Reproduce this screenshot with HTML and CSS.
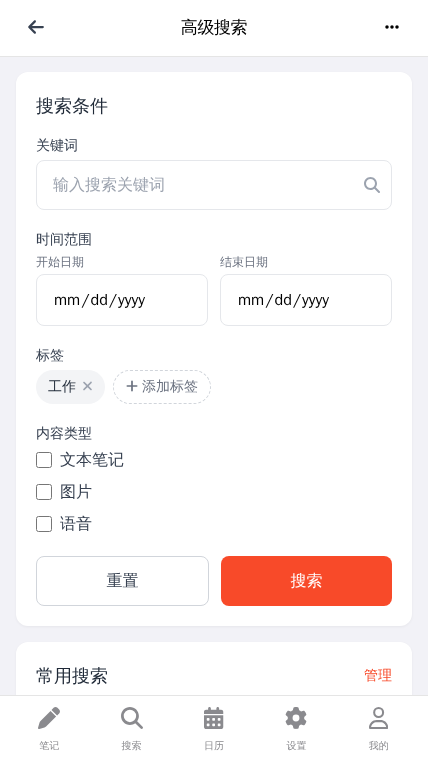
FILE: index.html
```html
<!DOCTYPE html>
<html lang="zh-CN">
<head>
<meta charset="utf-8">
<title>高级搜索</title>
<link rel="stylesheet" href="styles.css">
</head>
<body>
<div class="app">
  <header class="header">
    <svg class="icon back" viewBox="0 0 448 512"><path d="M9.4 233.4c-12.5 12.5-12.5 32.8 0 45.3l160 160c12.5 12.5 32.8 12.5 45.3 0s12.5-32.8 0-45.3L109.2 288 416 288c17.7 0 32-14.3 32-32s-14.3-32-32-32l-306.7 0L214.6 118.6c12.5-12.5 12.5-32.8 0-45.3s-32.8-12.5-45.3 0l-160 160z"/></svg>
    <h1>高级搜索</h1>
    <svg class="icon more" viewBox="0 0 448 512"><path d="M8 256a56 56 0 1 1 112 0A56 56 0 1 1 8 256zm160 0a56 56 0 1 1 112 0 56 56 0 1 1 -112 0zm216-56a56 56 0 1 1 0 112 56 56 0 1 1 0-112z"/></svg>
  </header>
  <main class="content">
    <section class="card">
      <h2>搜索条件</h2>
      <div class="group">
        <label class="label">关键词</label>
        <div class="search-box">
          <input class="keyword" type="text" placeholder="输入搜索关键词">
          <svg class="icon glass" viewBox="0 0 512 512"><path d="M416 208c0 45.9-14.9 88.3-40 122.7L502.6 457.4c12.5 12.5 12.5 32.8 0 45.3s-32.8 12.5-45.3 0L330.7 376c-34.4 25.2-76.8 40-122.7 40C93.1 416 0 322.9 0 208S93.1 0 208 0S416 93.1 416 208zM208 352a144 144 0 1 0 0-288 144 144 0 1 0 0 288z"/></svg>
        </div>
      </div>
      <div class="group">
        <label class="label">时间范围</label>
        <div class="dates">
          <div><label class="sub">开始日期</label><input class="date" type="date"></div>
          <div><label class="sub">结束日期</label><input class="date" type="date"></div>
        </div>
      </div>
      <div class="group">
        <label class="label">标签</label>
        <div class="tags">
          <span class="tag">工作<svg class="icon close" viewBox="0 0 384 512"><path d="M342.6 150.6c12.5-12.5 12.5-32.8 0-45.3s-32.8-12.5-45.3 0L192 210.7 86.6 105.4c-12.5-12.5-32.8-12.5-45.3 0s-12.5 32.8 0 45.3L146.7 256 41.4 361.4c-12.5 12.5-12.5 32.8 0 45.3s32.8 12.5 45.3 0L192 301.3 297.4 406.6c12.5 12.5 32.8 12.5 45.3 0s12.5-32.8 0-45.3L237.3 256 342.6 150.6z"/></svg></span>
          <span class="tag add"><svg class="icon plus" viewBox="0 0 448 512"><path d="M256 80c0-17.7-14.3-32-32-32s-32 14.3-32 32V224H48c-17.7 0-32 14.3-32 32s14.3 32 32 32H192V432c0 17.7 14.3 32 32 32s32-14.3 32-32V288H400c17.7 0 32-14.3 32-32s-14.3-32-32-32H256V80z"/></svg>添加标签</span>
        </div>
      </div>
      <div class="group types">
        <label class="label">内容类型</label>
        <label class="check"><input type="checkbox">文本笔记</label>
        <label class="check"><input type="checkbox">图片</label>
        <label class="check"><input type="checkbox">语音</label>
      </div>
      <div class="actions">
        <button class="btn reset">重置</button>
        <button class="btn primary">搜索</button>
      </div>
    </section>
    <section class="card">
      <div class="card-head"><h2>常用搜索</h2><a class="manage">管理</a></div>
    </section>
  </main>
  <nav class="tabs">
    <a class="tab"><svg class="icon" viewBox="0 0 512 512"><path d="M362.7 19.3L314.3 67.7 444.3 197.7l48.4-48.4c25-25 25-65.5 0-90.5L453.3 19.3c-25-25-65.5-25-90.5 0zm-71 71L58.6 323.5c-10.4 10.4-18 23.3-22.2 37.4L1 481.2C-1.5 489.7 .8 498.8 7 505s15.3 8.5 23.7 6.1l120.3-35.4c14.1-4.2 27-11.8 37.4-22.2L421.7 220.3 291.7 90.3z"/></svg><span>笔记</span></a>
    <a class="tab"><svg class="icon" viewBox="0 0 512 512"><path d="M416 208c0 45.9-14.9 88.3-40 122.7L502.6 457.4c12.5 12.5 12.5 32.8 0 45.3s-32.8 12.5-45.3 0L330.7 376c-34.4 25.2-76.8 40-122.7 40C93.1 416 0 322.9 0 208S93.1 0 208 0S416 93.1 416 208zM208 352a144 144 0 1 0 0-288 144 144 0 1 0 0 288z"/></svg><span>搜索</span></a>
    <a class="tab"><svg class="icon" viewBox="0 0 448 512"><path fill-rule="evenodd" d="M128 0c17.7 0 32 14.3 32 32V64H288V32c0-17.7 14.3-32 32-32s32 14.3 32 32V64h48c26.5 0 48 21.5 48 48v48H0V112C0 85.5 21.5 64 48 64H96V32c0-17.7 14.3-32 32-32zM0 192H448V464c0 26.5-21.5 48-48 48H48c-26.5 0-48-21.5-48-48V192zm64 80v32c0 8.8 7.2 16 16 16h32c8.8 0 16-7.2 16-16v-32c0-8.8-7.2-16-16-16H80c-8.8 0-16 7.2-16 16zm128 0v32c0 8.8 7.2 16 16 16h32c8.8 0 16-7.2 16-16v-32c0-8.8-7.2-16-16-16h-32c-8.8 0-16 7.2-16 16zm128 0v32c0 8.8 7.2 16 16 16h32c8.8 0 16-7.2 16-16v-32c0-8.8-7.2-16-16-16h-32c-8.8 0-16 7.2-16 16zM64 400v32c0 8.8 7.2 16 16 16h32c8.8 0 16-7.2 16-16v-32c0-8.8-7.2-16-16-16H80c-8.8 0-16 7.2-16 16zm128 0v32c0 8.8 7.2 16 16 16h32c8.8 0 16-7.2 16-16v-32c0-8.8-7.2-16-16-16h-32c-8.8 0-16 7.2-16 16zm128 0v32c0 8.8 7.2 16 16 16h32c8.8 0 16-7.2 16-16v-32c0-8.8-7.2-16-16-16h-32c-8.8 0-16 7.2-16 16z"/></svg><span>日历</span></a>
    <a class="tab"><svg class="icon" viewBox="0 0 512 512"><path d="M495.9 166.6c3.2 8.7 .5 18.4-6.4 24.6l-43.3 39.4c1.1 8.3 1.7 16.8 1.7 25.4s-.6 17.1-1.7 25.4l43.3 39.4c6.9 6.2 9.6 15.9 6.4 24.6c-4.4 11.9-9.7 23.3-15.8 34.3l-4.7 8.1c-6.6 11-14 21.4-22.1 31.2c-5.9 7.2-15.7 9.6-24.5 6.8l-55.7-17.7c-13.4 10.3-28.2 18.9-44 25.4l-12.5 57.1c-2 9.1-9 16.3-18.2 17.8c-13.8 2.3-28 3.5-42.5 3.5s-28.7-1.2-42.5-3.5c-9.2-1.5-16.2-8.7-18.2-17.8l-12.5-57.1c-15.8-6.5-30.6-15.1-44-25.4L83.1 425.9c-8.8 2.8-18.6 .3-24.5-6.8c-8.1-9.8-15.5-20.2-22.1-31.2l-4.7-8.1c-6.1-11-11.4-22.4-15.8-34.3c-3.2-8.7-.5-18.4 6.4-24.6l43.3-39.4C64.6 273.1 64 264.6 64 256s.6-17.1 1.7-25.4L22.4 191.2c-6.9-6.2-9.6-15.9-6.4-24.6c4.4-11.9 9.7-23.3 15.8-34.3l4.7-8.1c6.6-11 14-21.4 22.1-31.2c5.9-7.2 15.7-9.6 24.5-6.8l55.7 17.7c13.4-10.3 28.2-18.9 44-25.4l12.5-57.1c2-9.1 9-16.3 18.2-17.8C227.3 1.2 241.5 0 256 0s28.7 1.2 42.5 3.5c9.2 1.5 16.2 8.7 18.2 17.8l12.5 57.1c15.8 6.5 30.6 15.1 44 25.4l55.7-17.7c8.8-2.8 18.6-.3 24.5 6.8c8.1 9.8 15.5 20.2 22.1 31.2l4.7 8.1c6.1 11 11.4 22.4 15.8 34.3zM256 336a80 80 0 1 0 0-160 80 80 0 1 0 0 160z"/></svg><span>设置</span></a>
    <a class="tab"><svg class="icon" viewBox="0 0 448 512"><path d="M304 128a80 80 0 1 0 -160 0 80 80 0 1 0 160 0zM96 128a128 128 0 1 1 256 0A128 128 0 1 1 96 128zM49.3 464H398.7c-8.9-63.3-63.3-112-129-112H178.3c-65.7 0-120.1 48.7-129 112zM0 482.3C0 383.8 79.8 304 178.3 304h91.4C368.2 304 448 383.8 448 482.3c0 16.4-13.3 29.7-29.7 29.7H29.7C13.3 512 0 498.7 0 482.3z"/></svg><span>我的</span></a>
  </nav>
</div>
</body>
</html>
```
FILE: styles.css
```css
* { box-sizing: border-box; }
body, h1, h2 { margin: 0; font-weight: 400; }
body, input, button { font-family: "WenQuanYi Zen Hei", "Noto Sans CJK SC", sans-serif; }
.app { height: 760px; display: flex; flex-direction: column; overflow: hidden; background: #f2f2f7; color: #374151; }
.icon { display: block; fill: currentColor; flex: none; }
.header { flex: none; height: 57px; padding: 0 28px 2px; display: flex; align-items: center; justify-content: space-between; background: #fff; border-bottom: 1px solid #e5e5e5; color: #000; }
.header h1 { padding-top: 2px; font-size: 17px; line-height: 24px; letter-spacing: -0.4px; }
.back { width: 16px; height: 18px; color: #374151; }
.more { width: 16px; height: 16px; }
.content { flex: 1; min-height: 0; overflow: hidden; padding: 15px 16px 0; }
.card { background: #fff; border-radius: 12px; padding: 20px; margin-bottom: 16px; box-shadow: 0 1px 3px rgba(0,0,0,.05); }
.card h2 { height: 28px; font-size: 18px; line-height: 28px; color: #1f2937; }
.card > h2 { margin-bottom: 16px; }
.group { margin-bottom: 20px; }
.label { display: block; font-size: 14px; line-height: 20px; height: 20px; margin-bottom: 4px; }
.search-box { display: flex; align-items: center; justify-content: space-between; height: 50px; border: 1px solid #e5e7eb; border-radius: 8px; padding: 0 11px 0 16px; }
.keyword { border: 0; outline: 0; padding: 0; width: 280px; font-size: 16px; line-height: 24px; background: none; }
.keyword::placeholder { color: #9ca3af; }
.glass { width: 16px; height: 16px; color: #9ca3af; }
.dates { display: grid; grid-template-columns: 1fr 1fr; gap: 12px; }
.sub { display: block; font-size: 12px; line-height: 16px; height: 16px; margin-bottom: 4px; color: #6b7280; }
.date { display: block; width: 100%; height: 52px; border: 1px solid #e5e7eb; border-radius: 8px; padding: 0 16px; font-size: 16px; background: #fff; color: #000; }
.date::-webkit-calendar-picker-indicator { display: none; }
.tags { display: flex; gap: 8px; }
.tag { height: 34px; border-radius: 17px; padding: 0 12px; display: flex; align-items: center; background: #f3f4f6; font-size: 14px; line-height: 20px; color: #1f2937; }
.close { width: 11px; height: 14px; margin: 0 0 2px 6px; color: #9ca3af; }
.add { background: #fff; border: 1px dashed #d1d5db; color: #6b7280; }
.plus { width: 12px; height: 14px; margin: 0 4px 2px 0; }
.check { display: flex; align-items: center; font-size: 16px; line-height: 24px; height: 24px; margin-bottom: 8px; }
.check input { width: 16px; height: 16px; margin: 0 8px 0 0; }
.actions { display: grid; grid-template-columns: 173px 171px; gap: 12px; }
.btn { height: 50px; padding: 0; border: 0; border-radius: 8px; font-size: 16px; }
.reset { background: #fff; border: 1px solid #d1d5db; color: #374151; }
.primary { background: #f84a29; color: #fff; }
.card-head { display: flex; align-items: center; justify-content: space-between; height: 28px; }
.manage { font-size: 14px; color: #f84a29; }
.tabs { flex: none; height: 65px; padding: 11px 8px 0; display: flex; background: #fff; border-top: 1px solid #e5e5e5; color: #8a8a8e; }
.tab { flex: 1; display: flex; flex-direction: column; align-items: center; font-size: 10px; line-height: 15px; }
.tab .icon { height: 22px; margin-bottom: 9px; }
```
